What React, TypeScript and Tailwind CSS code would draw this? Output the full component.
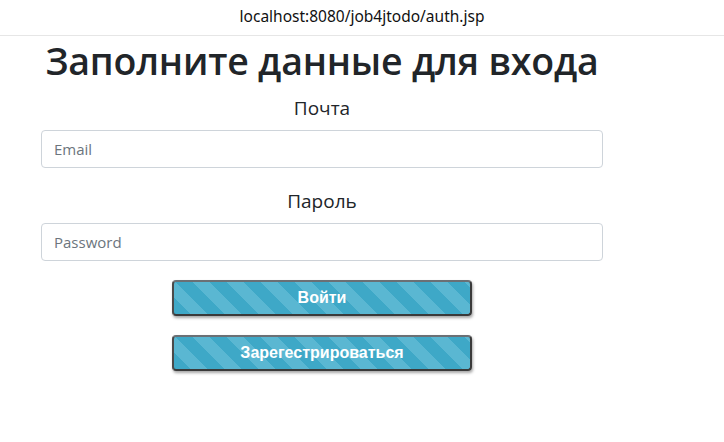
import React from "react";

export default function App() {
  const btn =
    "w-[300px] h-[36px] rounded-[4px] border-2 border-[#3a3a3a] border-t-[#6b7075] border-l-[#4a4a4a] shadow-[1px_2px_3px_rgba(0,0,0,0.35)] bg-[repeating-linear-gradient(45deg,#3ea8c7_0px,#3ea8c7_12px,#5ab7d2_12px,#5ab7d2_24px)] text-white font-bold text-[16px] [font-family:'Liberation_Sans',Arial,sans-serif] flex items-center justify-center";
  return (
    <div className="w-[724px] h-[442px] bg-white flex flex-col [font-family:'Open_Sans','Noto_Sans',sans-serif] text-[#212529]">
      <div className="h-[36px] border-b border-[#e6e6e6] flex items-center justify-center text-[15.5px] text-[#111] [font-family:'Noto_Sans',sans-serif] pb-[1px]">
        localhost:8080/job4jtodo/auth.jsp
      </div>
      <div className="w-[562px] ml-[41px] flex flex-col items-center">
        <h1 className="mt-[2px] text-[37.5px] leading-[46px] font-semibold tracking-[-0.2px]">
          Заполните данные для входа
        </h1>
        <div className="mt-[10px] text-[19px] leading-[28px]">Почта</div>
        <input
          className="mt-[8px] w-full h-[38px] rounded-[4px] border border-[#ced4da] px-[12px] text-[15px] placeholder:text-[#6c757d] outline-none"
          placeholder="Email"
        />
        <div className="mt-[19px] text-[19px] leading-[28px]">Пароль</div>
        <input
          className="mt-[8px] w-full h-[38px] rounded-[4px] border border-[#ced4da] px-[12px] text-[15px] placeholder:text-[#6c757d] outline-none"
          placeholder="Password"
        />
        <button className={"mt-[19px] " + btn}>Войти</button>
        <button className={"mt-[19px] " + btn}>Зарегестрироваться</button>
      </div>
    </div>
  );
}
